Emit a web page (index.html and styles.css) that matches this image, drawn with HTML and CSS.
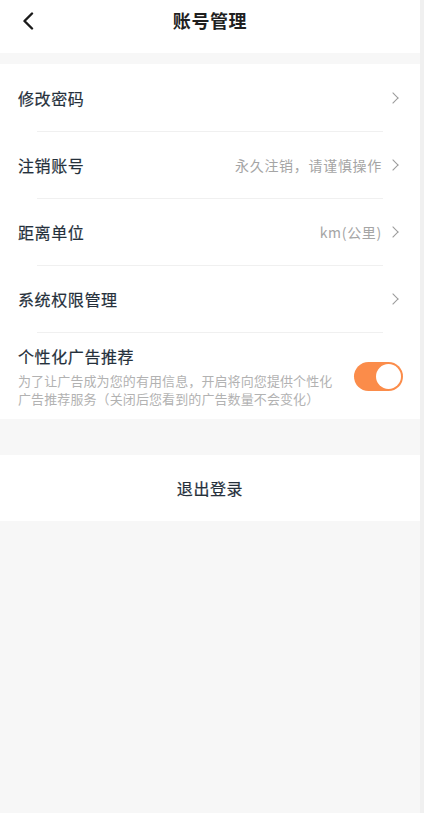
FILE: index.html
```html
<!DOCTYPE html>
<html lang="zh-CN">
<head>
    <meta charset="UTF-8">
    <meta name="viewport" content="width=device-width, initial-scale=1.0">
    <title>账号管理</title>
    <link rel="stylesheet" href="styles.css">
</head>
<body>
    <div class="app">
        <header class="top-bar">
            <span class="back">
                <svg width="12" height="18" viewBox="0 0 12 18"><path d="M10 1.5 L2.5 9 L10 16.5" fill="none" stroke="#1a1a1a" stroke-width="2.4" stroke-linecap="round" stroke-linejoin="round"/></svg>
            </span>
            <h1>账号管理</h1>
        </header>

        <div class="settings-card">
            <div class="row">
                <span class="label">修改密码</span>
                <span class="arrow"></span>
            </div>
            <div class="row">
                <span class="label">注销账号</span>
                <span class="value">永久注销，请谨慎操作</span>
                <span class="arrow"></span>
            </div>
            <div class="row">
                <span class="label">距离单位</span>
                <span class="value">km(公里)</span>
                <span class="arrow"></span>
            </div>
            <div class="row">
                <span class="label">系统权限管理</span>
                <span class="arrow"></span>
            </div>
            <div class="row ad-row">
                <div class="ad-text">
                    <div class="label">个性化广告推荐</div>
                    <p class="desc">为了让广告成为您的有用信息，开启将向您提供个性化广告推荐服务（关闭后您看到的广告数量不会变化）</p>
                </div>
                <span class="switch on"><span class="knob"></span></span>
            </div>
        </div>

        <div class="logout">退出登录</div>
    </div>
</body>
</html>
```

FILE: styles.css
```css
body {
    margin: 0;
    background-color: #f0f0f0;
    font-family: "Noto Sans CJK SC", "Noto Sans", sans-serif;
    color: #25303b;
}
.app {
    width: 420px;
    min-height: 813px;
    background-color: #f7f7f7;
}
.top-bar {
    height: 53px;
    background-color: white;
    display: flex;
    align-items: center;
    justify-content: center;
    position: relative;
}
.top-bar h1 {
    margin: 0;
    font-size: 18px;
    font-weight: bold;
    letter-spacing: 0.6px;
    color: #1f1f1f;
    margin-top: -13px;
}
.back {
    position: absolute;
    left: 22px;
    top: 12px;
    display: flex;
}
.settings-card {
    margin-top: 11px;
    background-color: white;
}
.row {
    height: 67px;
    display: flex;
    align-items: center;
    padding: 0 20px 0 18px;
    position: relative;
}
.row + .row::before {
    content: "";
    position: absolute;
    top: 0;
    left: 37px;
    right: 37px;
    height: 1px;
    background-color: #f0f0f0;
}
.label {
    font-size: 16px;
    font-weight: 400;
    letter-spacing: 0.6px;
    flex: 1;
    -webkit-text-stroke: 0.2px #25303b;
}
.value {
    font-size: 14px;
    letter-spacing: 0.7px;
    color: #a5a5a5;
    margin-right: 7px;
}
.arrow {
    width: 7px;
    height: 7px;
    border-top: 1.5px solid #9a9a9a;
    border-right: 1.5px solid #9a9a9a;
    transform: rotate(45deg);
    margin-right: 3px;
}
.ad-row {
    height: 87px;
    align-items: flex-start;
    padding-right: 17px;
}
.ad-text {
    flex: 1;
    padding-top: 12px;
}
.desc {
    margin: 4px 0 0;
    font-size: 13px;
    line-height: 17.5px;
    letter-spacing: 0.1px;
    color: #b2b2b2;
    width: 322px;
}
.switch {
    margin-top: 30px;
    width: 49px;
    height: 29px;
    border-radius: 15px;
    background-color: #fb8c4a;
    display: flex;
    align-items: center;
    justify-content: flex-end;
    padding: 0 2px;
    box-sizing: border-box;
}
.knob {
    width: 25px;
    height: 25px;
    border-radius: 50%;
    background-color: white;
}
.logout {
    margin-top: 36px;
    height: 66px;
    background-color: white;
    display: flex;
    align-items: center;
    justify-content: center;
    font-size: 16px;
    font-weight: 400;
    letter-spacing: 0.6px;
    -webkit-text-stroke: 0.2px #25303b;
}
```
